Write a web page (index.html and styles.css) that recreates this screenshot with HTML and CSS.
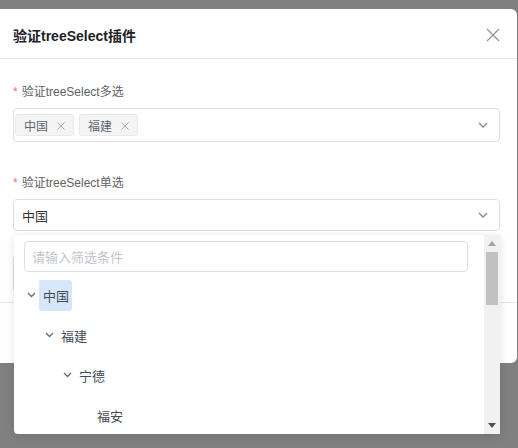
FILE: index.html
```html
<!DOCTYPE html>
<html lang="zh">
<head>
<meta charset="utf-8">
<link rel="stylesheet" href="styles.css">
</head>
<body>
<div class="modal">
  <div class="modal-header">
    <span class="modal-title">验证treeSelect插件</span>
    <svg class="close" width="14" height="14" viewBox="0 0 14 14"><path d="M1 1L13 13M13 1L1 13" stroke="#909399" stroke-width="1.2" fill="none"/></svg>
  </div>
  <div class="modal-body">
    <div class="field">
      <div class="label"><span class="req">*</span>验证treeSelect多选</div>
      <div class="input multi">
        <span class="tag">中国<svg width="8" height="8" viewBox="0 0 8 8"><path d="M0.5 0.5L7.5 7.5M7.5 0.5L0.5 7.5" stroke="#a8abb2" stroke-width="1" fill="none"/></svg></span>
        <span class="tag">福建<svg width="8" height="8" viewBox="0 0 8 8"><path d="M0.5 0.5L7.5 7.5M7.5 0.5L0.5 7.5" stroke="#a8abb2" stroke-width="1" fill="none"/></svg></span>
        <svg class="arrow" width="10" height="6" viewBox="0 0 10 6"><path d="M1 1L5 5L9 1" stroke="#7d8aa3" stroke-width="1.3" fill="none"/></svg>
      </div>
    </div>
    <div class="field second">
      <div class="label"><span class="req">*</span>验证treeSelect单选</div>
      <div class="input single">
        <span class="value">中国</span>
        <svg class="arrow" width="10" height="6" viewBox="0 0 10 6"><path d="M1 1L5 5L9 1" stroke="#7d8aa3" stroke-width="1.3" fill="none"/></svg>
      </div>
    </div>
    <div class="field third">
      <div class="ghost-box"></div>
    </div>
  </div>
  <div class="modal-footer"></div>
</div>

<div class="dropdown">
  <div class="dd-main">
    <div class="search">请输入筛选条件</div>
    <div class="tree">
      <div class="node lv1"><svg class="chev" width="9" height="6" viewBox="0 0 9 6"><path d="M1 1L4.5 4.5L8 1" stroke="#5f6b80" stroke-width="1.3" fill="none"/></svg><span class="label-text active">中国</span></div>
      <div class="node lv2"><svg class="chev" width="9" height="6" viewBox="0 0 9 6"><path d="M1 1L4.5 4.5L8 1" stroke="#5f6b80" stroke-width="1.3" fill="none"/></svg><span class="label-text">福建</span></div>
      <div class="node lv3"><svg class="chev" width="9" height="6" viewBox="0 0 9 6"><path d="M1 1L4.5 4.5L8 1" stroke="#5f6b80" stroke-width="1.3" fill="none"/></svg><span class="label-text">宁德</span></div>
      <div class="node lv4"><span class="label-text">福安</span></div>
    </div>
  </div>
  <div class="scrollbar">
    <div class="sb-btn"><svg width="8" height="5" viewBox="0 0 8 5"><path d="M0 5L4 0L8 5Z" fill="#a3a3a3"/></svg></div>
    <div class="sb-track"><div class="sb-thumb"></div></div>
    <div class="sb-btn"><svg width="8" height="5" viewBox="0 0 8 5"><path d="M0 0L4 5L8 0Z" fill="#505050"/></svg></div>
  </div>
</div>
</body>
</html>
```
FILE: styles.css
```css
html, body {
  margin: 0;
  padding: 0;
}
body {
  background: #808080;
  width: 518px;
  height: 448px;
  overflow: hidden;
  font-family: "Liberation Sans", "Noto Sans CJK SC", sans-serif;
  position: relative;
}
.modal {
  margin-top: 9px;
  width: 517px;
  background: #fff;
  border-radius: 0 6px 6px 0;
  height: 354px;
  display: flex;
  flex-direction: column;
}
.modal-header {
  height: 50px;
  border-bottom: 1px solid #e4e7ed;
  display: flex;
  align-items: center;
  justify-content: space-between;
  padding: 0 17px 0 13px;
  box-sizing: border-box;
}
.modal-title {
  font-size: 14px;
  font-weight: bold;
  color: #1d2129;
  padding-top: 2px;
}
.close {
  margin-top: 2px;
}
.modal-body {
  padding: 25px 17px 0 13px;
  flex: 1;
}
.field {
  display: flex;
  flex-direction: column;
}
.label {
  font-size: 12px;
  color: #606266;
  height: 16px;
  line-height: 16px;
  margin-bottom: 8px;
}
.req {
  color: #f56c6c;
  margin-right: 4px;
  font-size: 12px;
}
.input {
  border: 1px solid #dcdfe6;
  border-radius: 4px;
  display: flex;
  align-items: center;
  position: relative;
  box-sizing: border-box;
}
.input .arrow {
  margin-left: auto;
  margin-right: 11px;
}
.multi {
  height: 34px;
  padding-left: 1px;
  gap: 5px;
}
.tag {
  height: 22px;
  box-sizing: border-box;
  background: #f4f4f5;
  border: 1px solid #e9e9eb;
  border-radius: 3px;
  font-size: 12px;
  color: #5f6470;
  display: inline-flex;
  align-items: center;
  padding: 0 8px 0 8px;
  gap: 9px;
}
.tag svg {
  margin-top: 1px;
}
.second {
  margin-top: 33px;
}
.single {
  height: 32px;
  padding-left: 8px;
}
.value {
  font-size: 13px;
  color: #333;
}
.third {
  margin-top: 24px;
}
.ghost-box {
  height: 36px;
  border: 1px solid #dcdfe6;
  border-radius: 4px;
}
.modal-footer {
  height: 60px;
  border-top: 1px solid #e4e7ed;
}
.dropdown {
  position: absolute;
  left: 14px;
  top: 235px;
  width: 486px;
  height: 199px;
  background: #fff;
  box-shadow: 0 2px 10px rgba(0,0,0,0.12);
  border-radius: 4px 0 0 4px;
  display: flex;
  overflow: hidden;
}
.dd-main {
  flex: 1;
  padding: 6px 16px 0 10px;
}
.search {
  height: 31px;
  box-sizing: border-box;
  border: 1px solid #dcdfe6;
  border-radius: 4px;
  font-size: 13px;
  color: #c0c4cc;
  padding-left: 7px;
  display: flex;
  align-items: center;
}
.tree {
  padding-top: 3px;
}
.node {
  height: 40px;
  display: flex;
  align-items: center;
  font-size: 13px;
  color: #444a55;
}
.chev {
  margin-right: 3px;
  flex: none;
}
.lv1 { padding-left: 3px; }
.lv2 { padding-left: 21px; }
.lv3 { padding-left: 39px; }
.lv4 { padding-left: 69px; }
.label-text {
  display: inline-flex;
  align-items: center;
  height: 31px;
  padding: 0 3px 0 4px;
  border-radius: 3px;
}
.active {
  background: #d6e7fb;
}
.scrollbar {
  width: 16px;
  background: #f1f1f1;
  display: flex;
  flex-direction: column;
}
.sb-btn {
  height: 17px;
  display: flex;
  align-items: center;
  justify-content: center;
}
.sb-track {
  flex: 1;
}
.sb-thumb {
  margin: 0 2px;
  height: 53px;
  background: #c1c1c1;
}
```
